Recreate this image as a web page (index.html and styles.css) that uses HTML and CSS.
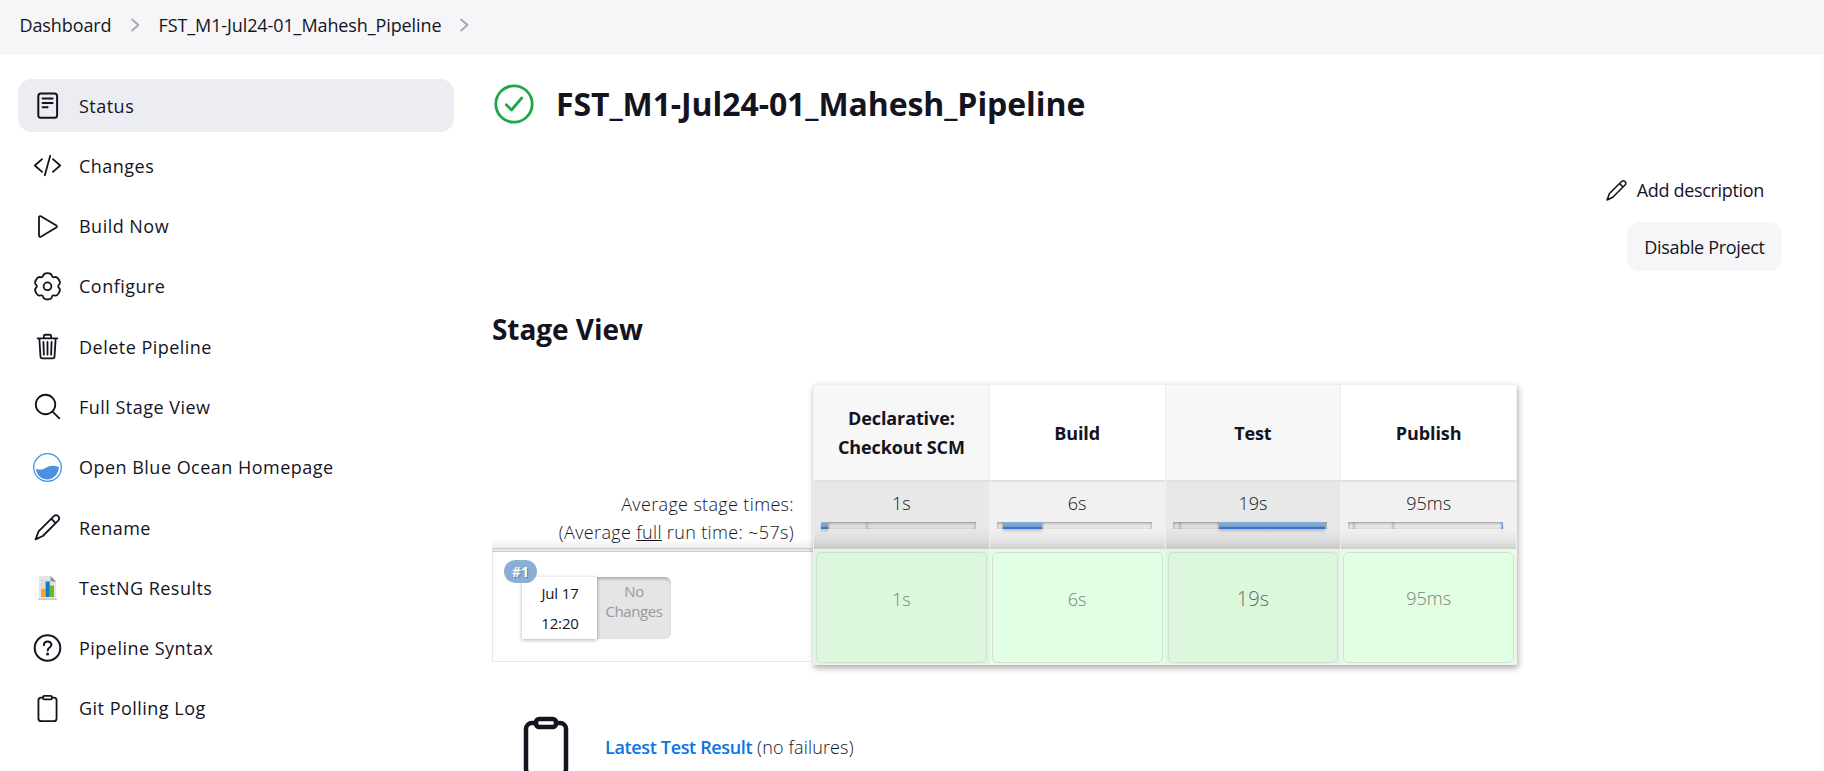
FILE: index.html
```html
<!DOCTYPE html>
<html lang="en">
<head>
<meta charset="utf-8">
<title>FST_M1-Jul24-01_Mahesh_Pipeline</title>
<link rel="stylesheet" href="styles.css">
</head>
<body>
<svg class="defs" width="0" height="0">
  <symbol id="chevron" viewBox="0 0 10 14"><path d="M1.5 1l7 6-7 6"/></symbol>
  <symbol id="pencil" viewBox="0 0 29 29"><path d="M2.6 26.4l3-8.1L20.9 3.2c1.3-1.2 3.1-1.2 4.3 0s1.200 3.100 0 4.400L9.800 23z M18.400 5.800l4.300 4.300M2.600 26.400l7.200-3.400"/></symbol>
  <symbol id="clipboard" viewBox="0 0 512 512"><path d="M336 64h32a48 48 0 0148 48v320a48 48 0 01-48 48H144a48 48 0 01-48-48V112a48 48 0 0148-48h32"/><rect x="176" y="32" width="160" height="64" rx="26"/></symbol>
</svg>

<nav class="breadcrumbs">
  <a>Dashboard</a>
  <svg class="chevron"><use href="#chevron"/></svg>
  <a>FST_M1-Jul24-01_Mahesh_Pipeline</a>
  <svg class="chevron"><use href="#chevron"/></svg>
</nav>

<div class="page">
  <aside class="tasks">
    <a class="task active"><svg class="icon" viewBox="0 0 29 29"><g stroke-width="2"><rect x="5.300" y="2.600" width="18.800" height="24.200" rx="2.600"/><path d="M9.600 7.500h10M9.600 12h10M9.600 16.300h5"/></g></svg>Status</a>
    <a class="task"><svg class="icon wide" viewBox="0 0 512 512"><path d="M160 368L32 256l128-112M352 368l128-112-128-112M304 84l-96 344"/></svg>Changes</a>
    <a class="task"><svg class="icon wide" viewBox="0 0 512 512"><path d="M106 96v320c0 19 18 29 32 21l274-163c13-8 13-28 0-36L138 75c-14-8-32 2-32 21z"/></svg>Build Now</a>
    <a class="task"><svg class="icon" viewBox="0 0 29 29"><g transform="translate(14.500 14.300)"><path d="M0-13.200Q3.800-13.200 4.350-10.850Q4.900-8.500 7.200-9.200Q9.530-9.890 11.430-6.600Q13.330-3.310 11.550-1.650Q9.800 0 11.550 1.650Q13.330 3.310 11.430 6.600Q9.530 9.890 7.200 9.200Q4.900 8.500 4.350 10.850Q3.800 13.200 0 13.200Q-3.800 13.200-4.350 10.850Q-4.900 8.500-7.200 9.200Q-9.530 9.890-11.430 6.600Q-13.330 3.310-11.550 1.650Q-9.800 0-11.550-1.650Q-13.330-3.310-11.430-6.600Q-9.530-9.890-7.200-9.200Q-4.900-8.500-4.350-10.850Q-3.800-13.200 0-13.200z"/><circle r="3.900"/></g></svg>Configure</a>
    <a class="task"><svg class="icon wide" viewBox="0 0 512 512"><path d="M112 112l20 320c.95 18.490 14.400 32 32 32h184c17.670 0 30.870-13.510 32-32l20-320M80 112h352M192 112V72a24 24 0 0124-24h80a24 24 0 0124 24v40M256 176v224M184 176l8 224M328 176l-8 224"/></svg>Delete Pipeline</a>
    <a class="task"><svg class="icon wide" viewBox="0 0 512 512"><circle cx="221" cy="221" r="172"/><path d="M345 345l120 120"/></svg>Full Stage View</a>
    <a class="task"><svg class="icon ocean" viewBox="0 0 29 29"><circle cx="14.500" cy="14.500" r="13.800"/><path d="M3 15.700C6.500 17.300 9.500 16.600 12.500 14.900C17 12.400 21 12.200 26 14.200C25.500 20.500 20.500 26.500 14.500 26.500S3.300 21.700 3 15.700z"/></svg>Open Blue Ocean Homepage</a>
    <a class="task"><svg class="icon"><use href="#pencil"/></svg>Rename</a>
    <a class="task"><svg class="icon report" viewBox="0 0 29 29"><path fill="#e4e4e4" d="M6 3h12l5 5v18.500H6z"/><path fill="#c9c9c9" d="M5 25.500h19v1.500H5zM7.500 7.500h7v.7h-7zM7.500 10.500h5v.7h-5zM7.500 13.500h5v.7h-5z"/><path fill="#929292" d="M17.500 3v5.500H23z"/><path fill="#f9a51f" d="M8 15.800h4.600v8.200H8z"/><path fill="#0b7dcb" d="M12.600 8.500h4.200V24h-4.200z"/><path fill="#6fb52c" d="M16.800 12.500h4.200V24h-4.200z"/></svg>TestNG Results</a>
    <a class="task"><svg class="icon" viewBox="0 0 29 29"><g stroke-width="2"><circle cx="14.500" cy="14" r="12.800"/><path d="M10.900 11.200c.1-4.800 7.500-4.700 7.500-.4 0 2.700-3.700 2.700-3.700 5.600"/></g><circle cx="14.600" cy="20" r="1.500" class="dot"/></svg>Pipeline Syntax</a>
    <a class="task"><svg class="icon wide"><use href="#clipboard"/></svg>Git Polling Log</a>
  </aside>

  <main class="main">
    <header class="title">
      <svg class="success" viewBox="0 0 40 40"><circle cx="20" cy="20" r="18.200"/><path d="M12.300 20.800l5.200 5.200 10.200-12"/></svg>
      <h1>FST_M1-Jul24-01_Mahesh_Pipeline</h1>
    </header>
    <div class="actions">
      <a class="describe"><svg class="icon-small"><use href="#pencil"/></svg>Add description</a>
      <button class="button">Disable Project</button>
    </div>
    <h2>Stage View</h2>

    <section class="stage-view">
      <div class="runs">
        <div class="averages">Average stage times:<br>(Average <u>full</u> run time: ~57s)</div>
        <div class="run">
          <span class="badge">#1</span>
          <div class="when"><span>Jul 17</span><span>12:20</span></div>
          <div class="changes">No<br>Changes</div>
        </div>
      </div>
      <div class="stages">
        <div class="stage odd">
          <div class="name">Declarative:<br>Checkout SCM</div>
          <div class="mean">1s<div class="bar"><i class="fill" style="width:7px"></i><i class="seg" style="width:39px"></i><i class="seg rest"></i></div></div>
          <div class="cell"><div class="result">1s</div></div>
        </div>
        <div class="stage">
          <div class="name">Build</div>
          <div class="mean">6s<div class="bar"><i class="seg" style="width:6px"></i><i class="fill" style="width:39px"></i><i class="seg rest"></i></div></div>
          <div class="cell"><div class="result">6s</div></div>
        </div>
        <div class="stage odd">
          <div class="name">Test</div>
          <div class="mean">19s<div class="bar"><i class="seg" style="width:7px"></i><i class="seg" style="width:39px"></i><i class="fill rest"></i><i class="seg" style="width:2px"></i></div></div>
          <div class="cell"><div class="result longest">19s</div></div>
        </div>
        <div class="stage">
          <div class="name">Publish</div>
          <div class="mean">95ms<div class="bar"><i class="seg" style="width:6px"></i><i class="seg" style="width:39px"></i><i class="seg rest"></i><i class="fill" style="width:1px"></i></div></div>
          <div class="cell"><div class="result shortest">95ms</div></div>
        </div>
      </div>
    </section>

    <div class="tests">
      <svg class="big-icon"><use href="#clipboard"/></svg>
      <p><a>Latest Test Result</a> <span>(no failures)</span></p>
    </div>
  </main>
</div>
</body>
</html>
```
FILE: styles.css
```css
* { box-sizing: border-box; }
body {
  margin: 0;
  height: 771px;
  overflow: hidden;
  background: #fff;
  color: #14141f;
  font: 460 18px/28px "Open Sans", "Noto Sans", sans-serif;
}
svg { display: block; flex: none; fill: none; stroke: #14141f; stroke-linecap: round; stroke-linejoin: round; }
.defs { position: absolute; }

.breadcrumbs {
  display: flex;
  align-items: center;
  height: 55px;
  padding: 0 0 5px 19.5px;
  background: #f6f6f9;
}
.breadcrumbs a { letter-spacing: -.1px; }
.breadcrumbs .chevron { width: 10px; height: 14px; margin: 0 19px 0 18px; stroke: #a6a6b5; stroke-width: 1.9; stroke-linecap: butt; }

.page { display: flex; height: 716px; border-right: 3px solid #fbfbfb; }
.tasks { display: flex; flex-direction: column; gap: 7.3px; width: 436px; margin: 24px 38px 0 18px; flex: none; }
.task {
  display: flex;
  align-items: center;
  flex: none;
  gap: 17px;
  height: 53px;
  padding: 0 15px;
  border-radius: 14px;
  letter-spacing: .48px;
}
.task.active { background: #ecedf3; }
.icon { width: 29px; height: 29px; stroke-width: 1.8; }
.wide { stroke-width: 32; }
.ocean { stroke: #4a90e2; stroke-width: 1.3; }
.ocean path { fill: #4a90e2; stroke: none; }
.report { stroke: none; }
.dot { fill: #14141f; stroke: none; }

.main { flex: 1; padding-top: 27px; }
.title { display: flex; align-items: center; gap: 22px; height: 44px; }
.success { width: 40px; height: 40px; margin-left: 2px; stroke: #1ea64b; stroke-width: 2.8; }
h1 { margin: 0; font-size: 32px; line-height: 44px; letter-spacing: -.08px; }
.actions { display: flex; flex-direction: column; align-items: flex-end; padding: 50px 39px 0 0; letter-spacing: -.32px; }
.describe { display: flex; align-items: center; gap: 9px; height: 28px; margin-right: 18px; }
.icon-small { width: 23px; height: 23px; stroke-width: 2; }
.button {
  width: 155px;
  height: 49px;
  margin-top: 18px;
  padding: 1px 0 0;
  border: 0;
  border-radius: 13px;
  background: #f6f6f9;
  color: inherit;
  font: inherit;
  letter-spacing: inherit;
}
h2 { margin: 38px 0 35px; font-size: 28px; line-height: 40px; letter-spacing: -.05px; }

.stage-view { display: flex; align-items: flex-start; font-weight: 350; }
.runs { width: 321px; padding-top: 97px; }
.averages {
  height: 71px;
  padding: 9px 19px 0 0;
  background: linear-gradient(to top, #cfcfcf 1px, #e6e6e6 1px, #e6e6e6 3px, #cacaca 3px, #cacaca 4px, #efefef 4px, #fff 13px);
  text-align: right;
  letter-spacing: .35px;
  white-space: nowrap;
}
.run {
  position: relative;
  display: flex;
  height: 110px;
  padding: 25px 0 0 29px;
  border: solid #e6e6e6;
  border-width: 0 0 1px 1px;
  font-size: 15px;
  font-weight: 400;
}
.badge {
  position: absolute;
  left: 11px;
  top: 8px;
  width: 33px;
  height: 23px;
  border-radius: 12px;
  background: #8aafd4;
  color: #fff;
  font-size: 14px;
  font-weight: 700;
  line-height: 23px;
  text-align: center;
  text-shadow: 1px 1px 1px #5d7894;
}
.when {
  display: flex;
  flex-direction: column;
  width: 75px;
  height: 62px;
  padding: 1px 0 0 1px;
  background: #fff;
  box-shadow: 0 1px 4px rgba(0, 0, 0, .3);
  line-height: 30px;
  letter-spacing: -.15px;
  text-align: center;
}
.changes {
  width: 74px;
  height: 62px;
  padding-top: 4px;
  border-radius: 0 6px 6px 0;
  background: #e5e5e5;
  box-shadow: inset 1px 2px 3px rgba(0, 0, 0, .25);
  color: #999;
  line-height: 20px;
  letter-spacing: -.4px;
  text-align: center;
}

.stages {
  display: flex;
  width: 704px;
  height: 281px;
  border: 1px solid #efefef;
  border-width: 1px 1px 1px 0;
  background: #f1f1f1;
  box-shadow: 1px 3px 6px rgba(0, 0, 0, .33);
}
.stage { display: flex; flex-direction: column; flex: 1; text-align: center; border-left: 1px solid #efefef; }
.name {
  display: flex;
  align-items: center;
  justify-content: center;
  height: 97px;
  padding-top: 1px;
  border-bottom: 2px solid #e0e0e0;
  background: #fff;
  font-weight: 680;
  line-height: 29px;
  letter-spacing: -.1px;
}
.odd .name { background: #f7f7f7; }
.mean {
  height: 67px;
  padding-top: 7px;
  margin-bottom: 1px;
  background: linear-gradient(to top, #d0d0d0, #e6e6e6 9px, #f1f1f1 20px);
}
.odd .mean { background: linear-gradient(to top, #c9c9c9, #dcdcdc 9px, #e8e8e8 20px); }
.bar { display: flex; height: 7px; margin: 5px 13px 0 7px; }
.seg { background: rgba(0, 0, 0, .035); box-shadow: inset 0 1px 3px rgba(0, 0, 0, .38); }
.fill { background: linear-gradient(#8aafd4 0, #729fd2 70%, #3b72d0 75%); box-shadow: 0 2px 3px rgba(0, 0, 0, .2); }
.rest { flex: 1; }
.cell { flex: 1; padding: 2px 2px 1px; background: #e3ffe3; }
.odd .cell { background: #ddf7dd; }
.result {
  height: 111px;
  padding-top: 32px;
  border: 1px solid #d3dcd5;
  border-radius: 6px;
  color: #758578;
}
.longest { color: #5c6e60; font-size: 20px; }
.shortest { padding-top: 31px; }

.tests { display: flex; gap: 27px; padding: 50px 0 0 22px; }
.big-icon { width: 64px; height: 64px; stroke-width: 36; }
.tests p { margin: 18px 0 0; font-weight: 350; letter-spacing: .15px; }
.tests a { color: #0b72e7; font-weight: 600; letter-spacing: -.35px; }
```
